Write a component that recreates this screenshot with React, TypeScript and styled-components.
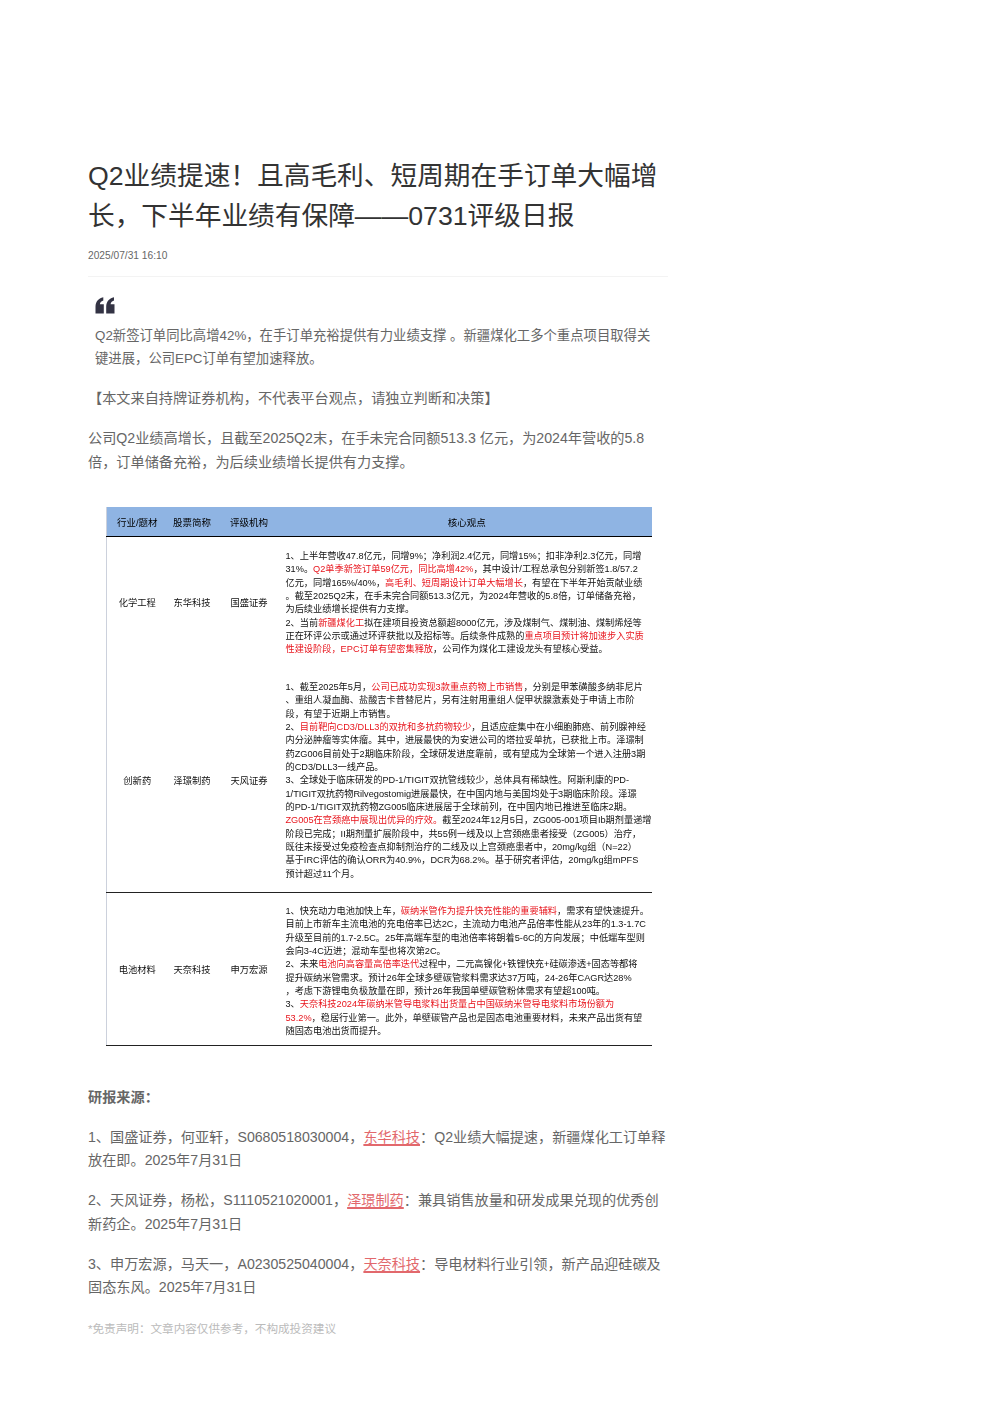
import styled, { createGlobalStyle } from 'styled-components';

const GlobalStyle = createGlobalStyle`
  html, body {
    margin: 0;
    padding: 0;
    background: #fff;
  }
  body {
    font-family: "Liberation Sans", "Noto Sans CJK SC", sans-serif;
  }
`;

// | toggles red within a line of the table picture
const rows = [
  {
    sector: '化学工程',
    stock: '东华科技',
    broker: '国盛证券',
    height: 131,
    inset: 2,
    lines: [
      '1、上半年营收47.8亿元，同增9%；净利润2.4亿元，同增15%；扣非净利2.3亿元，同增',
      '31%。|Q2单季新签订单59亿元，同比高增42%|，其中设计/工程总承包分别新签1.8/57.2',
      '亿元，同增165%/40%，|高毛利、短周期设计订单大幅增长|，有望在下半年开始贡献业绩',
      '。截至2025Q2末，在手未完合同额513.3亿元，为2024年营收的5.8倍，订单储备充裕，',
      '为后续业绩增长提供有力支撑。',
      '2、当前|新疆煤化工|拟在建项目投资总额超8000亿元，涉及煤制气、煤制油、煤制烯烃等',
      '正在环评公示或通过环评获批以及招标等。后续条件成熟的|重点项目预计将加速步入实质',
      '|性建设阶段，EPC订单有望密集释放|，公司作为煤化工建设龙头有望核心受益。',
    ],
  },
  {
    sector: '创新药',
    stock: '泽璟制药',
    broker: '天风证券',
    height: 225,
    inset: 2,
    lines: [
      '1、截至2025年5月，|公司已成功实现3款重点药物上市销售|，分别是甲苯磺酸多纳非尼片',
      '、重组人凝血酶、盐酸吉卡昔替尼片，另有注射用重组人促甲状腺激素处于申请上市阶',
      '段，有望于近期上市销售。',
      '2、|目前靶向CD3/DLL3的双抗和多抗药物较少|，且适应症集中在小细胞肺癌、前列腺神经',
      '内分泌肿瘤等实体瘤。其中，进展最快的为安进公司的塔拉妥单抗，已获批上市。泽璟制',
      '药ZG006目前处于2期临床阶段，全球研发进度靠前，或有望成为全球第一个进入注册3期',
      '的CD3/DLL3一线产品。',
      '3、全球处于临床研发的PD-1/TIGIT双抗管线较少，总体具有稀缺性。阿斯利康的PD-',
      '1/TIGIT双抗药物Rilvegostomig进展最快，在中国内地与美国均处于3期临床阶段。泽璟',
      '的PD-1/TIGIT双抗药物ZG005临床进展居于全球前列，在中国内地已推进至临床2期。',
      '|ZG005在宫颈癌中展现出优异的疗效。|截至2024年12月5日，ZG005-001项目Ib期剂量递增',
      '阶段已完成；II期剂量扩展阶段中，共55例一线及以上宫颈癌患者接受（ZG005）治疗，',
      '既往未接受过免疫检查点抑制剂治疗的二线及以上宫颈癌患者中，20mg/kg组（N=22）',
      '基于IRC评估的确认ORR为40.9%，DCR为68.2%。基于研究者评估，20mg/kg组mPFS',
      '预计超过11个月。',
    ],
  },
  {
    sector: '电池材料',
    stock: '天奈科技',
    broker: '申万宏源',
    height: 153,
    inset: 5,
    lines: [
      '1、快充动力电池加快上车，|碳纳米管作为提升快充性能的重要辅料|，需求有望快速提升。',
      '目前上市新车主流电池的充电倍率已达2C，主流动力电池产品倍率性能从23年的1.3-1.7C',
      '升级至目前的1.7-2.5C。25年高端车型的电池倍率将朝着5-6C的方向发展；中低端车型则',
      '会向3-4C迈进；混动车型也将次第2C。',
      '2、未来|电池向高容量高倍率迭代|过程中，二元高镍化+铁锂快充+硅碳渗透+固态等都将',
      '提升碳纳米管需求。预计26年全球多壁碳管浆料需求达37万吨，24-26年CAGR达28%',
      '，考虑下游锂电负极放量在即，预计26年我国单壁碳管粉体需求有望超100吨。',
      '3、|天奈科技2024年碳纳米管导电浆料出货量占中国碳纳米管导电浆料市场份额为',
      '|53.2%|，稳居行业第一。此外，单壁碳管产品也是固态电池重要材料，未来产品出货有望',
      '随固态电池出货而提升。',
    ],
  },
];

const sources = [
  {
    before: '1、国盛证券，何亚轩，S0680518030004，',
    link: '东华科技',
    after: '：Q2业绩大幅提速，新疆煤化工订单释放在即。2025年7月31日',
  },
  {
    before: '2、天风证券，杨松，S1110521020001，',
    link: '泽璟制药',
    after: '：兼具销售放量和研发成果兑现的优秀创新药企。2025年7月31日',
  },
  {
    before: '3、申万宏源，马天一，A0230525040004，',
    link: '天奈科技',
    after: '：导电材料行业引领，新产品迎硅碳及固态东风。2025年7月31日',
  },
];

const ReportLine = ({ text }: { text: string }) => (
  <Line>
    {text.split('|').map((part, i) =>
      i % 2 === 1 ? <Red key={i}>{part}</Red> : <span key={i}>{part}</span>,
    )}
  </Line>
);

export default function App() {
  return (
    <Page>
      <GlobalStyle />
      <Article>
        <Title>Q2业绩提速！且高毛利、短周期在手订单大幅增长，下半年业绩有保障——0731评级日报</Title>
        <DateText>2025/07/31 16:10</DateText>
        <Divider />
        <Quote>
          <QuoteIcon viewBox="0 0 20 17">
            <path d="M0.5 9.5C0.7 4.8 3.2 1.3 8.3 0.2V3.4C6 4.2 5 5.6 4.9 7.2H8.8V16.5H0.5Z" />
            <path d="M11.2 9.5C11.4 4.8 13.9 1.3 19 0.2V3.4C16.7 4.2 15.7 5.6 15.6 7.2H19.5V16.5H11.2Z" />
          </QuoteIcon>
          <QuoteText>
            Q2新签订单同比高增42%，在手订单充裕提供有力业绩支撑 。新疆煤化工多个重点项目取得关键进展，公司EPC订单有望加速释放。
          </QuoteText>
        </Quote>
        <Paragraph>【本文来自持牌证券机构，不代表平台观点，请独立判断和决策】</Paragraph>
        <Paragraph>
          公司Q2业绩高增长，且截至2025Q2末，在手未完合同额513.3 亿元，为2024年营收的5.8倍，订单储备充裕，为后续业绩增长提供有力支撑。
        </Paragraph>
        <ReportTable>
          <colgroup>
            <col width={61} />
            <col width={49} />
            <col width={65} />
            <col />
          </colgroup>
          <thead>
            <tr>
              <HeadCell>行业/题材</HeadCell>
              <HeadCell>股票简称</HeadCell>
              <HeadCell>评级机构</HeadCell>
              <HeadCell>核心观点</HeadCell>
            </tr>
          </thead>
          <tbody>
            {rows.map((row, index) => (
              <ReportRow key={row.stock} $ruled={index === 2} $height={row.height}>
                <NameCell>{row.sector}</NameCell>
                <NameCell>{row.stock}</NameCell>
                <NameCell>{row.broker}</NameCell>
                <BodyCell $inset={row.inset}>
                  {row.lines.map((line) => (
                    <ReportLine key={line} text={line} />
                  ))}
                </BodyCell>
              </ReportRow>
            ))}
          </tbody>
        </ReportTable>
        <SourceHeading>研报来源：</SourceHeading>
        {sources.map((source) => (
          <Paragraph key={source.link}>
            {source.before}
            <StockLink href="#">{source.link}</StockLink>
            {source.after}
          </Paragraph>
        ))}
        <Disclaimer>*免责声明：文章内容仅供参考，不构成投资建议</Disclaimer>
      </Article>
    </Page>
  );
}

const Page = styled.div`
  min-height: 1403px;
  padding: 156px 0 0 88px;
  box-sizing: border-box;
`;

const Article = styled.article`
  width: 580px;
`;

const Title = styled.h1`
  margin: 0;
  font-size: 26.7px;
  line-height: 40px;
  font-weight: 400;
  color: #333;
`;

const DateText = styled.div`
  margin-top: 12px;
  font-size: 10.2px;
  line-height: 16px;
  color: #666;
`;

const Divider = styled.div`
  height: 1px;
  margin-top: 12px;
  background: #f3f3f3;
`;

const Quote = styled.div`
  margin-top: 20px;
  padding: 0 8px 0.7px 7px;
`;

const QuoteIcon = styled.svg`
  display: block;
  width: 20px;
  height: 17px;
  fill: #333344;
`;

const QuoteText = styled.p`
  margin: 10px 0 0;
  font-size: 13.35px;
  line-height: 23px;
  color: #666;
`;

const Paragraph = styled.p`
  margin: 16.5px 0 0;
  font-size: 14.17px;
  line-height: 23.5px;
  color: #666;
`;

const ReportTable = styled.table`
  width: 546px;
  margin: 33px 0 0 18px;
  border-collapse: collapse;
  table-layout: fixed;
  border-left: 1px solid #ccd1dc;
  border-bottom: 1px solid #222;
  filter: blur(0.3px);
`;

const HeadCell = styled.th`
  height: 29px;
  padding: 0;
  background: #8fb4e3;
  border-bottom: 1px solid #000;
  font-size: 9.5px;
  font-weight: 400;
  text-align: center;
  color: #000;
`;

const ReportRow = styled.tr<{ $ruled: boolean; $height: number }>`
  height: ${(p) => p.$height}px;
  border-top: ${(p) => (p.$ruled ? '1px solid #222' : 'none')};
`;

const NameCell = styled.td`
  padding: 0;
  font-size: 9.3px;
  text-align: center;
  vertical-align: middle;
  color: #111;
`;

const BodyCell = styled.td<{ $inset: number }>`
  padding: ${(p) => p.$inset}px 0 0 4px;
  font-size: 9.2px;
  line-height: 13.33px;
  vertical-align: middle;
  color: #111;
`;

const Line = styled.div`
  white-space: nowrap;
`;

const Red = styled.span`
  color: #e8141c;
`;

const SourceHeading = styled.p`
  margin: 39.5px 0 0;
  font-size: 14.17px;
  line-height: 23.5px;
  font-weight: 700;
  color: #666;
`;

const StockLink = styled.a`
  color: #e2686c;
  text-decoration: underline;
  text-decoration-thickness: 1.5px;
  text-underline-offset: 2px;
`;

const Disclaimer = styled.p`
  margin: 20px 0 0;
  font-size: 11.6px;
  line-height: 18px;
  color: #bbb;
`;
